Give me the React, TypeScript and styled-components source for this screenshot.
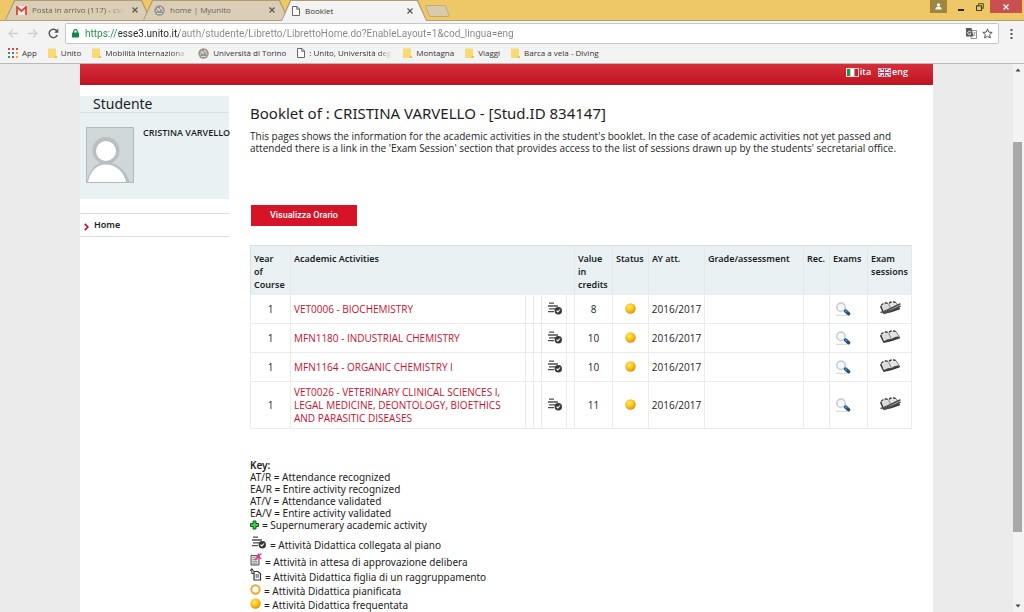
import React from "react";
import styled, { createGlobalStyle, css } from "styled-components";

const uiFont = '"Open Sans", "Noto Sans", sans-serif';
const pageFont = '"Noto Sans", "Open Sans", sans-serif';
const red = "#d61327";
const mist = "#e9f1f3";

const GlobalStyle = createGlobalStyle`
  *, *::before, *::after { box-sizing: border-box; }
  body { margin: 0; background: #ebebeb; }
  h1, h2, p, ul { margin: 0; padding: 0; }
  button { border: 0; padding: 0; background: none; font: inherit; color: inherit; cursor: pointer; }
  a { color: inherit; text-decoration: none; }
  svg { display: block; flex: none; }
`;

/* ---------- browser window ---------- */

const Window = styled.div`
  display: flex;
  flex-direction: column;
  height: 100vh;
  overflow: hidden;
  font: 8px/12px ${uiFont};
  color: #333;
`;

const TitleBar = styled.header`
  display: flex;
  justify-content: space-between;
  align-items: flex-start;
  height: 21px;
  padding-left: 5px;
  background: #eec767;
  border-bottom: 1px solid #b3a078;
`;

const TabStrip = styled.div`
  display: flex;
  align-items: flex-end;
  height: 21px;
`;

const trapezoid = "polygon(9px 0, calc(100% - 9px) 0, 100% 100%, 0 100%)";

const Tab = styled.div<{ $active?: boolean }>`
  position: relative;
  isolation: isolate;
  z-index: ${(p) => (p.$active ? 1 : 0)};
  display: flex;
  align-items: center;
  gap: 5px;
  width: 146px;
  height: ${(p) => (p.$active ? 21 : 20)}px;
  margin-right: -8px;
  margin-bottom: ${(p) => (p.$active ? 0 : 1)}px;
  padding: 0 12px 0 11px;
  background: #b09c70;
  clip-path: ${trapezoid};
  color: ${(p) => (p.$active ? "#333" : "#6b6251")};

  &::before {
    content: "";
    position: absolute;
    z-index: -1;
    inset: 1px 1px 0;
    background: ${(p) => (p.$active ? "#f3f3f3" : "#dacfb6")};
    clip-path: ${trapezoid};
  }
`;

const TabTitle = styled.span<{ $fade?: boolean }>`
  flex: 1;
  white-space: nowrap;
  ${(p) => p.$fade && css`mask-image: linear-gradient(to right, #000 82%, transparent);`}
`;

const NewTab = styled.button`
  width: 21px;
  height: 12px;
  margin: 0 0 4px 8px;
  background: #d8cbab;
  border: 1px solid #c0ab79;
  border-radius: 2px;
  transform: skewX(20deg);
`;

const WindowControls = styled.div`
  display: flex;
  padding-right: 2px;
`;

const WindowButton = styled.button<{ $bg?: string; $w: number }>`
  display: grid;
  place-items: center;
  width: ${(p) => p.$w}px;
  height: 13px;
  background: ${(p) => p.$bg ?? "transparent"};
`;

const Toolbar = styled.div`
  display: flex;
  align-items: center;
  gap: 10px;
  height: 24px;
  padding: 1px 8px 0 8px;
  background: #f3f3f3;
`;

const IconButton = styled.button`
  display: grid;
  place-items: center;
  width: 10px;
  height: 12px;
`;

const AddressBar = styled.form`
  display: flex;
  flex: 1;
  align-items: center;
  gap: 6px;
  height: 21px;
  margin: 0 -3px;
  padding: 0 6px;
  background: #fff;
  border: 1px solid #c6c6c6;
  border-radius: 2px;
`;

const AddressInput = styled.input`
  flex: 1;
  min-width: 0;
  height: 16px;
  padding: 0;
  border: 0;
  outline: 0;
  color: #858585;
  font: 10px/16px Roboto, ${uiFont};
  background: linear-gradient(to right, #1a8a45 34px, #222 34px 94px, #858585 94px);
  background-clip: text;
  -webkit-text-fill-color: transparent;
`;

const Bookmarks = styled.nav`
  display: flex;
  align-items: center;
  gap: 11px;
  height: 19px;
  padding: 0 0 2px 8px;
  background: #f3f3f3;
  border-bottom: 1px solid #b9b9b9;
`;

const Bookmark = styled.a<{ $w?: number }>`
  display: flex;
  align-items: center;
  gap: 4px;
  width: ${(p) => (p.$w ? `${p.$w}px` : "auto")};
  white-space: nowrap;
  ${(p) => p.$w && css`mask-image: linear-gradient(to right, #000 85%, transparent);`}
`;

/* ---------- web page ---------- */

const Viewport = styled.div`
  display: flex;
  flex: 1;
  min-height: 0;
  background: #ebebeb;
`;

const Scroller = styled.div`
  flex: 1;
  overflow: hidden;
`;

const ScrollBar = styled.div`
  display: flex;
  flex-direction: column;
  align-items: center;
  width: 11px;
  padding: 4px 2px 4px 0;
  background: #f3f3f3;
`;

const Track = styled.div`
  display: grid;
  grid-template-rows: 70fr 390fr 72fr;
  flex: 1;
  width: 100%;
`;

const Thumb = styled.div`
  grid-row: 2;
  background: #a8a8a8;
`;

const Page = styled.div`
  max-width: 853px;
  min-height: 100%;
  margin: 0 auto;
  background: #fff;
  font: 10px/12px ${pageFont};
  color: #1d1d1d;
`;

const Banner = styled.header`
  display: flex;
  justify-content: flex-end;
  gap: 7px;
  height: 21px;
  padding: 2px 25px 0;
  background: linear-gradient(#d6303c, #c1121f);
  color: #fff;
`;

const LangLink = styled.a`
  display: flex;
  align-items: center;
  gap: 1px;
  height: 12px;
  font-family: ${uiFont};
  font-size: 9px;
  font-weight: 600;
`;

const Columns = styled.div`
  display: grid;
  grid-template-columns: 149px minmax(0, 1fr);
  gap: 21px;
  padding: 11px 22px 0 0;
`;

const StudentCard = styled.section`
  height: 103px;
  background: ${mist};
`;

const SideTitle = styled.h2`
  height: 17px;
  padding-left: 13px;
  border-bottom: 1px solid #d5e1e4;
  font-size: 14px;
  font-weight: 400;
  line-height: 16px;
`;

const Profile = styled.div`
  display: flex;
  gap: 9px;
  padding: 14px 0 0 6px;
`;

const StudentName = styled.strong`
  font-family: ${uiFont};
  font-size: 9px;
  font-weight: 600;
  line-height: 11px;
  white-space: nowrap;
`;

const SideMenu = styled.nav`
  margin-top: 14px;
  border-top: 1px solid #dcdcdc;
  border-bottom: 1px solid #dcdcdc;
`;

const SideLink = styled.a`
  display: flex;
  align-items: center;
  gap: 5px;
  height: 22px;
  padding-left: 4px;
  font-size: 9px;
  font-weight: 600;

  svg { margin-top: 4px; }
`;

const Title = styled.h1`
  padding-top: 7px;
  font-size: 15px;
  font-weight: 400;
  line-height: 20px;
`;

const Intro = styled.p`
  margin-top: 7px;
  max-width: 650px;
  font-family: ${uiFont};
`;

const RedButton = styled.button`
  display: block;
  width: 106px;
  height: 21px;
  margin: 51px 0 19px 1px;
  background: ${red};
  color: #fff;
  font: 500 9px/21px Roboto, "Liberation Sans", sans-serif;
`;

const Booklet = styled.table`
  width: 100%;
  table-layout: fixed;
  border-collapse: collapse;
  border: 1px solid #d9dfe0;
  line-height: 13px;
`;

const Th = styled.th`
  height: 49px;
  padding: 6px 0 3px 3px;
  background: ${mist};
  border-right: 1px solid #e0e9eb;
  font-size: 9px;
  font-weight: 600;
  text-align: left;
  vertical-align: top;
`;

const Td = styled.td<{ $align?: "text" | "icon" }>`
  height: 29px;
  padding: ${(p) => (p.$align === "text" ? "4px 20px 3px 3px" : p.$align === "icon" ? "0 0 0 5px" : "0")};
  border: 1px solid #ececec;
  font-family: ${uiFont};
  text-align: ${(p) => (p.$align ? "left" : "center")};
  vertical-align: middle;

  svg { margin: ${(p) => (p.$align ? "0" : "0 auto 2px")}; }
`;

const CourseLink = styled.a`
  color: #c8102e;
`;

const Legend = styled.section`
  margin-top: 30px;
`;

const LegendTitle = styled.strong`
  display: block;
  font-weight: 600;
`;

const LegendRow = styled.div<{ $h?: number }>`
  display: flex;
  align-items: flex-end;
  gap: 3px;
  height: ${(p) => p.$h ?? 12}px;

  svg { margin-bottom: ${(p) => (p.$h ? 2 : 1)}px; }
`;

/* ---------- icons ---------- */

const Gmail = () => (
  <svg width="11" height="9" viewBox="0 0 11 9">
    <rect width="11" height="9" rx="1" fill="#f0ebe0" />
    <path d="M1 9V1l4.500 4L10 1v8" fill="none" stroke="#d5453a" strokeWidth="1.800" />
  </svg>
);

const Seal = () => (
  <svg width="11" height="11" viewBox="0 0 11 11">
    <circle cx="5.500" cy="5.500" r="5.200" fill="#98948e" />
    <path d="M2 7l2-4 1 3 2-4 2 5M3 8.500h5" fill="none" stroke="#dcd8d0" strokeWidth="1" />
  </svg>
);

const Sheet = () => (
  <svg width="8" height="10" viewBox="0 0 8 10">
    <path d="M.5.500h4.500l2.500 2.500v6.500H.5zM4.800.500v2.700h2.700" fill="#fff" stroke="#666" />
  </svg>
);

const Folder = () => (
  <svg width="9" height="10" viewBox="0 0 9 10">
    <path d="M0 .5h8v7.500h1V10H0z" fill="#f7da74" />
    <path d="M7 8h2v2H6z" fill="#efc04c" />
  </svg>
);

const Apps = () => (
  <svg width="10" height="10" viewBox="0 0 10 10">
    {["#d9483b", "#d9483b", "#d9483b", "#3a9a55", "#3c78d8", "#e8b32c", "#3a9a55", "#d9483b", "#e8b32c"].map((c, i) => (
      <rect key={i} x={(i % 3) * 4} y={Math.floor(i / 3) * 4} width="2" height="2" fill={c} />
    ))}
  </svg>
);

const Cross = ({ color = "#5c564a" }: { color?: string }) => (
  <svg width="6" height="6" viewBox="0 0 6 6">
    <path d="M.5.5l5 5M5.500.5l-5 5" stroke={color} strokeWidth="1.200" />
  </svg>
);

const Arrow = ({ forward }: { forward?: boolean }) => (
  <svg width="10" height="9" viewBox="0 0 10 9">
    <path
      d={forward ? "M0 4.500h9M5 .5l4 4-4 4" : "M10 4.500H1M5 .5l-4 4 4 4"}
      fill="none"
      stroke="#cfcfcf"
      strokeWidth="1.300"
    />
  </svg>
);

const Reload = () => (
  <svg width="11" height="11" viewBox="0 0 11 11">
    <path d="M9.300 7A4.200 4.200 0 1 1 8.700 2.800" fill="none" stroke="#555" strokeWidth="1.500" />
    <path d="M10.300.5v4.200H6.200z" fill="#555" />
  </svg>
);

const Lock = () => (
  <svg width="7" height="9" viewBox="0 0 7 9">
    <rect y="3.500" width="7" height="5" rx=".6" fill="#0f8a43" />
    <path d="M1.700 4V2.500a1.800 1.800 0 0 1 3.600 0V4" fill="none" stroke="#0f8a43" strokeWidth="1.200" />
  </svg>
);

const Translate = () => (
  <svg width="11" height="11" viewBox="0 0 11 11">
    <path d="M4 2.500h6.500v8H5z" fill="#fff" stroke="#777" strokeWidth=".8" />
    <path d="M0 0h5.500l2 8.500H0z" fill="#5a5a5a" />
    <path d="M5 4.200a1.700 1.700 0 1 0 0 1.500H3.600" fill="none" stroke="#fff" strokeWidth=".8" />
    <path d="M7.300 4.800h2.500M8.600 4v.8c0 1.500-.6 2.500-1.400 3.200M7.600 6l1.900 2" fill="none" stroke="#777" strokeWidth=".6" />
  </svg>
);

const Star = () => (
  <svg width="11" height="11" viewBox="0 0 11 11">
    <path
      d="M5.500.9l1.300 3.200 3.400.3-2.600 2.200.8 3.400-2.900-1.800L2.600 10l.8-3.400L.8 4.400l3.400-.3z"
      fill="#fff"
      stroke="#555"
    />
  </svg>
);

const Dots = () => (
  <svg width="3" height="10" viewBox="0 0 3 10">
    <path d="M.5 0h2v2h-2zM.5 4h2v2h-2zM.5 8h2v2h-2z" fill="#555" />
  </svg>
);

const Person = () => (
  <svg width="7" height="7" viewBox="0 0 7 7">
    <circle cx="3.500" cy="2" r="1.700" fill="#fff" />
    <path d="M.5 6.500V5l1.500-1h3l1.500 1v1.500z" fill="#fff" />
  </svg>
);

const Minimise = () => (
  <svg width="6" height="8" viewBox="0 0 6 8">
    <path d="M0 6h6v2H0z" fill="#2b2618" />
  </svg>
);

const Restore = () => (
  <svg width="13" height="8" viewBox="0 0 13 8">
    <path d="M2.500 2V.7h4.800v4.600H6" fill="none" stroke="#4d4429" />
    <path d="M.5 2.800h5v4.700h-5z" fill="none" stroke="#4d4429" strokeWidth="1.200" />
  </svg>
);

const Caret = ({ down }: { down?: boolean }) => (
  <svg width="6" height="4" viewBox="0 0 6 4">
    <path d={down ? "M.5.5h5L3 3.500z" : "M.5 3.500h5L3 .5z"} fill="#444" />
  </svg>
);

const ItalianFlag = () => (
  <svg width="13" height="9" viewBox="0 0 13 9">
    <rect width="13" height="9" fill="#f4dada" />
    <path d="M1 1h3.500v7H1z" fill="#1e9350" />
    <path d="M4.500 1h4v7h-4z" fill="#fff" />
    <path d="M8.500 1H12v7H8.500z" fill="#cc1f2c" />
  </svg>
);

const BritishFlag = () => (
  <svg width="13" height="9" viewBox="0 0 13 9">
    <rect width="13" height="9" fill="#32417f" />
    <path d="M0 0l13 9M13 0L0 9" stroke="#f3dfe3" strokeWidth="1.500" />
    <path d="M6.500 0v9M0 4.500h13" stroke="#fff" strokeWidth="2.400" />
    <path d="M6.500 0v9M0 4.500h13" stroke="#cf2337" strokeWidth="1.200" />
    <path d="M.4.400h12.200v8.200H.4z" fill="none" stroke="#e9c9d0" strokeWidth=".8" />
  </svg>
);

const Avatar = () => (
  <svg width="48" height="56" viewBox="0 0 48 56" role="img" aria-label="Profile photo">
    <path d="M.5.500h47v55H.5z" fill="#d0d7d8" stroke="#b3b9ba" />
    <circle cx="20" cy="23.500" r="13.500" fill="#b9bfc0" />
    <path d="M1 55c2-12 9-20 19-20s20 8 23.500 20z" fill="#b9bfc0" />
    <circle cx="20" cy="24" r="10" fill="#fff" />
    <path d="M2 55c2-10 8-17.500 18-17.500S38 45 40 55z" fill="#fff" />
  </svg>
);

const Chevron = () => (
  <svg width="5" height="8" viewBox="0 0 5 8">
    <path d="M.8.800L3.800 4 .8 7.200" fill="none" stroke="#c8102e" strokeWidth="1.700" />
  </svg>
);

const PlanIcon = () => (
  <svg width="17" height="13" viewBox="-2 0 17 13">
    <path d="M1 1.200h5M0 4h10M1 6.800h6.500M0 9.600h6" stroke="#505050" strokeWidth="1.300" />
    <circle cx="10.300" cy="8.700" r="3.700" fill="#383838" />
    <path d="M8.500 8.700l1.300 1.300 2.300-2.500" fill="none" stroke="#fff" strokeWidth="1.100" />
  </svg>
);

const Ball = () => (
  <svg width="11" height="11" viewBox="0 0 11 11">
    <defs>
      <radialGradient id="ball" cx=".4" cy=".35" r=".65">
        <stop offset="0" stopColor="#ffec6a" />
        <stop offset=".55" stopColor="#fbc318" />
        <stop offset="1" stopColor="#df9110" />
      </radialGradient>
    </defs>
    <circle cx="5.500" cy="5.500" r="5.200" fill="url(#ball)" />
  </svg>
);

const Ring = () => (
  <svg width="11" height="11" viewBox="0 0 11 11">
    <circle cx="5.500" cy="5.500" r="4.200" fill="#fffdf6" stroke="#eda52a" strokeWidth="1.900" />
  </svg>
);

const Magnifier = () => (
  <svg width="16" height="14" viewBox="0 0 16 14">
    <path d="M1 13.300h11" stroke="#cfcfcf" strokeWidth=".9" />
    <circle cx="6" cy="5.300" r="4.200" fill="#f5f8fb" stroke="#c9ced4" strokeWidth="1.600" />
    <path d="M10.600 9l3 2.800" stroke="#1f4f85" strokeWidth="3.400" strokeLinecap="round" />
    <path d="M10 8.500l2 1.800" stroke="#5c95c8" strokeWidth="1.200" />
  </svg>
);

const Book = ({ crossed }: { crossed?: boolean }) => (
  <svg width="22" height="14" viewBox="0 0 22 14">
    <path d="M.8 5.500L4.500 13l8-1.700 8.500-3L17.500 2z" fill="#4a4a4a" />
    <path d="M2 4.500C4 2 7 1.200 9.500 2.800l3 6.400c-3-.8-5 0-7.800 2.200z" fill="#dcdcdc" />
    <path d="M9.500 2.800C11 .8 14 .3 16.800 1.500l3.700 5.300c-3-.6-5.500.2-8 2.400z" fill="#e4e4e4" />
    <path d="M2 4.500C4 2 7 1.200 9.500 2.800 11 .8 14 .3 16.800 1.500" fill="none" stroke="#222" strokeWidth="1.200" strokeDasharray="3 1.500" />
    <path d="M9.500 2.800l3 6.400M16.800 1.500l3.700 5.300" fill="none" stroke="#777" strokeWidth=".8" />
    <path d="M1.800 5L4.700 12l8-1.800 8-2.800" fill="none" stroke="#333" strokeWidth="1" />
    {crossed && (
      <path d="M1.500 11.500C9 10 14.500 5.500 21.500 2.800M5 12.500C11 10.500 15 8 21.500 5" fill="none" stroke="#505050" strokeWidth="1.500" />
    )}
  </svg>
);

const Plus = () => (
  <svg width="9" height="10" viewBox="0 0 9 10">
    <path d="M3 1h3v2.500h2.500v3H6V9H3V6.500H.5v-3H3z" fill="#2fd043" stroke="#14451f" strokeWidth=".9" />
  </svg>
);

const Pending = () => (
  <svg width="12" height="13" viewBox="0 0 12 13">
    <path d="M1 2.500h6.500L9 5v7H1z" fill="#ddd" stroke="#555" />
    <path d="M2.500 4.500h3M2.500 6.500h5M2.500 8.500h5M2.500 10.300h5" stroke="#888" strokeWidth=".8" />
    <path d="M5 7l5-5.500M6.500 3.500l5 2M8 .500L10 6M11.500.5L7 4" stroke="#e5308a" strokeWidth="1.300" />
  </svg>
);

const Child = () => (
  <svg width="12" height="13" viewBox="0 0 12 13">
    <path d="M0 3l1.800-2.500L3.500 3M1.800 1v4.500H4" fill="none" stroke="#333" />
    <path d="M4 3.500h4l2.500 2.300V12H4z" fill="#fff" stroke="#333" strokeWidth="1.200" />
    <path d="M5.500 7h3.500M5.500 9h3.500" stroke="#333" />
  </svg>
);

/* ---------- data ---------- */

const courses = [
  { name: "VET0006 - BIOCHEMISTRY", credits: 8, crossed: true },
  { name: "MFN1180 - INDUSTRIAL CHEMISTRY", credits: 10 },
  { name: "MFN1164 - ORGANIC CHEMISTRY I", credits: 10 },
  {
    name: "VET0026 - VETERINARY CLINICAL SCIENCES I, LEGAL MEDICINE, DEONTOLOGY, BIOETHICS AND PARASITIC DISEASES",
    credits: 11,
    crossed: true,
  },
];

const columnWidths = [40, 235, 8, 8, 25, 8, 38, 36, 56, 99, 26, 38, 44];

const legend = [
  { text: "AT/R = Attendance recognized" },
  { text: "EA/R = Entire activity recognized" },
  { text: "AT/V = Attendance validated" },
  { text: "EA/V = Entire activity validated" },
  { icon: <Plus />, text: "= Supernumerary academic activity" },
  { icon: <PlanIcon />, text: "= Attività Didattica collegata al piano", height: 20 },
  { icon: <Pending />, text: "= Attività in attesa di approvazione delibera", height: 17 },
  { icon: <Child />, text: "= Attività Didattica figlia di un raggruppamento", height: 15 },
  { icon: <Ring />, text: "= Attività Didattica pianificata", height: 14 },
  { icon: <Ball />, text: "= Attività Didattica frequentata", height: 14 },
];

export default function App() {
  return (
    <>
      <GlobalStyle />
      <Window>
        <TitleBar>
          <TabStrip>
            <Tab>
              <Gmail />
              <TabTitle $fade>Posta in arrivo (117) - cva</TabTitle>
              <IconButton aria-label="Close tab"><Cross /></IconButton>
            </Tab>
            <Tab>
              <Seal />
              <TabTitle>home | Myunito</TabTitle>
              <IconButton aria-label="Close tab"><Cross /></IconButton>
            </Tab>
            <Tab $active>
              <Sheet />
              <TabTitle>Booklet</TabTitle>
              <IconButton aria-label="Close tab"><Cross /></IconButton>
            </Tab>
            <NewTab aria-label="New tab" />
          </TabStrip>
          <WindowControls>
            <WindowButton $w={17} $bg="#9f863f" aria-label="Profile"><Person /></WindowButton>
            <WindowButton $w={28} aria-label="Minimise"><Minimise /></WindowButton>
            <WindowButton $w={15} aria-label="Restore"><Restore /></WindowButton>
            <WindowButton $w={32} $bg="#c94f50" aria-label="Close"><Cross color="#fff" /></WindowButton>
          </WindowControls>
        </TitleBar>

        <Toolbar>
          <IconButton aria-label="Back"><Arrow /></IconButton>
          <IconButton aria-label="Forward"><Arrow forward /></IconButton>
          <IconButton aria-label="Reload"><Reload /></IconButton>
          <AddressBar>
            <Lock />
            <AddressInput
              aria-label="Address"
              defaultValue="https://esse3.unito.it/auth/studente/Libretto/LibrettoHome.do?EnableLayout=1&cod_lingua=eng"
            />
            <IconButton type="button" aria-label="Translate"><Translate /></IconButton>
            <IconButton type="button" aria-label="Bookmark"><Star /></IconButton>
          </AddressBar>
          <IconButton aria-label="Menu"><Dots /></IconButton>
        </Toolbar>

        <Bookmarks>
          <Bookmark href="#"><Apps />App</Bookmark>
          <Bookmark href="#"><Folder />Unito</Bookmark>
          <Bookmark href="#" $w={95}><Folder />Mobilità Internaziona</Bookmark>
          <Bookmark href="#"><Seal />Università di Torino</Bookmark>
          <Bookmark href="#" $w={95}><Sheet />: Unito, Università deg</Bookmark>
          <Bookmark href="#"><Folder />Montagna</Bookmark>
          <Bookmark href="#"><Folder />Viaggi</Bookmark>
          <Bookmark href="#"><Folder />Barca a vela - Diving</Bookmark>
        </Bookmarks>

        <Viewport>
          <Scroller>
            <Page>
              <Banner>
                <LangLink href="#"><ItalianFlag />ita</LangLink>
                <LangLink href="#"><BritishFlag />eng</LangLink>
              </Banner>
              <Columns>
                <aside>
                  <StudentCard>
                    <SideTitle>Studente</SideTitle>
                    <Profile>
                      <Avatar />
                      <StudentName>CRISTINA VARVELLO</StudentName>
                    </Profile>
                  </StudentCard>
                  <SideMenu>
                    <SideLink href="#"><Chevron />Home</SideLink>
                  </SideMenu>
                </aside>
                <main>
                  <Title>Booklet of : CRISTINA VARVELLO - [Stud.ID 834147]</Title>
                  <Intro>
                    This pages shows the information for the academic activities in the student's booklet. In the case of
                    academic activities not yet passed and attended there is a link in the 'Exam Session' section that
                    provides access to the list of sessions drawn up by the students' secretarial office.
                  </Intro>
                  <RedButton>Visualizza Orario</RedButton>
                  <Booklet>
                    <colgroup>
                      {columnWidths.map((w, i) => <col key={i} width={w} />)}
                    </colgroup>
                    <thead>
                      <tr>
                        <Th>Year<br />of<br />Course</Th>
                        <Th colSpan={5}>Academic Activities</Th>
                        <Th>Value in credits</Th>
                        <Th>Status</Th>
                        <Th>AY att.</Th>
                        <Th>Grade/assessment</Th>
                        <Th>Rec.</Th>
                        <Th>Exams</Th>
                        <Th>Exam sessions</Th>
                      </tr>
                    </thead>
                    <tbody>
                      {courses.map((c) => (
                        <tr key={c.name}>
                          <Td>1</Td>
                          <Td $align="text"><CourseLink href="#">{c.name}</CourseLink></Td>
                          <Td />
                          <Td />
                          <Td><PlanIcon /></Td>
                          <Td />
                          <Td>{c.credits}</Td>
                          <Td><Ball /></Td>
                          <Td>2016/2017</Td>
                          <Td />
                          <Td />
                          <Td $align="icon"><Magnifier /></Td>
                          <Td><Book crossed={c.crossed} /></Td>
                        </tr>
                      ))}
                    </tbody>
                  </Booklet>
                  <Legend>
                    <LegendTitle>Key:</LegendTitle>
                    {legend.map((l) => (
                      <LegendRow key={l.text} $h={l.height}>{l.icon}{l.text}</LegendRow>
                    ))}
                  </Legend>
                </main>
              </Columns>
            </Page>
          </Scroller>
          <ScrollBar>
            <Caret />
            <Track><Thumb /></Track>
            <Caret down />
          </ScrollBar>
        </Viewport>
      </Window>
    </>
  );
}
